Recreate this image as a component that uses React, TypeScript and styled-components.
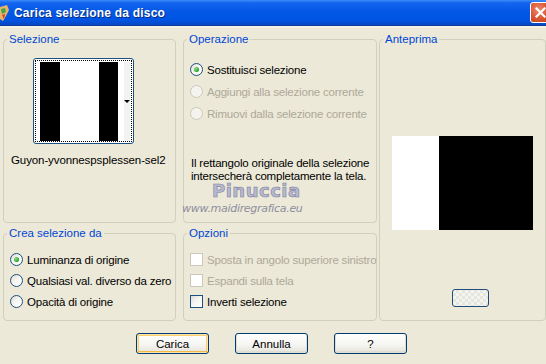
import styled, { createGlobalStyle } from 'styled-components'

const GlobalStyle = createGlobalStyle`
	html, body {
		margin: 0;
		padding: 0;
		background: #ece9d8;
		overflow: hidden;
	}
	* {
		box-sizing: border-box;
	}
`

const Window = styled.div`
	position: relative;
	width: 546px;
	height: 364px;
	display: flex;
	flex-direction: column;
	background: #ece9d8;
	font-family: 'Liberation Sans', Arial, sans-serif;
	font-size: 11px;
	color: #000;
	overflow: hidden;
`

const TitleBar = styled.div`
	height: 26px;
	flex: none;
	display: flex;
	align-items: center;
	gap: 4px;
	background: linear-gradient(
		to bottom,
		#3a8bf8 0%,
		#1464ee 12%,
		#0458e6 45%,
		#0054e3 80%,
		#0a47c4 100%
	);
	border-bottom: 1px solid #0c3d9c;
	color: #fff;
	font-family: 'Liberation Sans', Arial, sans-serif;
	font-weight: bold;
	font-size: 12px;
	text-shadow: 1px 1px 0 #0a2d80;
`

const TitleText = styled.span`
	flex: 1;
	letter-spacing: 0.2px;
`

const CloseButton = styled.div`
	width: 21px;
	height: 21px;
	margin-right: -5px;
	border: 1px solid #fff;
	border-radius: 3px;
	background: radial-gradient(circle at 40% 35%, #ec8a72 0%, #d9542f 55%, #c23d18 100%);
	display: flex;
	align-items: center;
	justify-content: center;
`

const Body = styled.div`
	flex: 1;
	display: flex;
	flex-direction: column;
	padding: 5px 0 0 3px;
	border-top: 2px solid #f4f2e8;
`

const Panels = styled.div`
	display: grid;
	grid-template-columns: 173px 7px 194px 2px 167px;
	grid-template-rows: 190px 4px 94px;
	grid-template-areas:
		'sel . op . prev'
		'. . . . prev'
		'crea . opt . prev';
`

const Group = styled.fieldset<{ $area: string }>`
	margin: 0;
	padding: 0 6px;
	min-width: 0;
	border: 1px solid #d0d0bf;
	border-radius: 4px;
	grid-area: ${(p) => p.$area};
	display: flex;
	flex-direction: column;
`

const Legend = styled.legend`
	padding: 0 2px;
	margin-left: -3px;
	color: #0046d5;
	font-size: 11.5px;
	line-height: 13px;
`

const Thumb = styled.div`
	position: relative;
	align-self: flex-start;
	margin: 12px 0 0 23px;
	width: 101px;
	height: 86px;
	border: 1px solid #1e4f7e;
	border-radius: 3px;
	background: #fff;
	padding: 3px 2px 2px 6px;
	display: flex;
	&::before {
		content: '';
		position: absolute;
		inset: 1px;
		border: 1px dotted #000;
	}
`

const Strip = styled.div<{ $w: number; $c: string }>`
	width: ${(p) => p.$w}px;
	background: ${(p) => p.$c};
`

const Arrow = styled.div`
	position: absolute;
	right: 3px;
	top: 41px;
	width: 0;
	height: 0;
	border-left: 3px solid transparent;
	border-right: 3px solid transparent;
	border-top: 3px solid #000;
`

const FileName = styled.div`
	margin: 10px 0 0 1px;
	font-size: 11.5px;
	letter-spacing: -0.1px;
`

const Options = styled.div<{ $top: number; $gap: number }>`
	display: flex;
	flex-direction: column;
	gap: ${(p) => p.$gap}px;
	margin-top: ${(p) => p.$top}px;
`

const OptionRow = styled.label<{ $disabled?: boolean }>`
	display: flex;
	align-items: center;
	gap: 4px;
	height: 13px;
	font-size: 11.5px;
	letter-spacing: -0.2px;
	color: ${(p) => (p.$disabled ? '#aca899' : '#000')};
	white-space: nowrap;
`

const RadioMark = styled.span<{ $checked?: boolean; $disabled?: boolean }>`
	width: 13px;
	height: 13px;
	flex: none;
	border-radius: 50%;
	border: 1px solid ${(p) => (p.$disabled ? '#cac8bb' : '#1c5180')};
	background: ${(p) =>
		p.$disabled
			? '#f4f3ee'
			: 'linear-gradient(135deg, #dcdad0 0%, #f6f5f1 45%, #fff 100%)'};
	display: flex;
	align-items: center;
	justify-content: center;
	&::after {
		content: '';
		display: ${(p) => (p.$checked ? 'block' : 'none')};
		width: 5px;
		height: 5px;
		border-radius: 50%;
		background: radial-gradient(circle at 35% 35%, #8fe08f, #21a121 70%);
	}
`

const CheckMark = styled.span<{ $disabled?: boolean }>`
	width: 13px;
	height: 13px;
	flex: none;
	border: 1px solid ${(p) => (p.$disabled ? '#cac8bb' : '#1c5180')};
	background: ${(p) =>
		p.$disabled ? '#fff' : 'linear-gradient(135deg, #dcdad0 0%, #f6f5f1 45%, #fff 100%)'};
`

const Note = styled.p`
	margin: 37px 0 0 1px;
	font-size: 11.5px;
	line-height: 13px;
	letter-spacing: -0.2px;
	white-space: nowrap;
`

const Preview = styled.div`
	display: flex;
	width: 141px;
	height: 94px;
	margin: 90px 0 0 6px;
	background: #000;
`

const PreviewWhite = styled.div`
	width: 47px;
	background: #fff;
`

const SmallButton = styled.div`
	width: 37px;
	height: 18px;
	margin: 59px 0 0 66px;
	border: 1px solid #1f4c7a;
	border-radius: 3px;
	background-color: #f4f4ef;
	background-image: linear-gradient(45deg, #e6e6e0 25%, transparent 25%, transparent 75%, #e6e6e0 75%),
		linear-gradient(45deg, #e6e6e0 25%, transparent 25%, transparent 75%, #e6e6e0 75%);
	background-size: 6px 6px;
	background-position: 0 0, 3px 3px;
`

const ButtonBar = styled.div`
	display: flex;
	gap: 26px;
	margin: 12px 0 0 133px;
`

const Button = styled.button<{ $default?: boolean }>`
	width: 73px;
	height: 21px;
	padding: 0;
	font-family: 'Liberation Sans', Arial, sans-serif;
	font-size: 11.5px;
	color: #000;
	border: 1px solid #003c74;
	border-radius: 3px;
	background: linear-gradient(to bottom, #fff 0%, #f4f4f0 60%, #e3e2da 100%);
	box-shadow: ${(p) =>
		p.$default
			? 'inset 0 0 0 1px #fce4a8, inset 0 -1px 0 1px #f5b845, inset 0 0 0 2px #f8cf72'
			: 'inset 0 -1px 0 1px #e0ddd2'};
`

const Watermark = styled.div`
	position: absolute;
	left: 182px;
	top: 181px;
	display: flex;
	flex-direction: column;
	align-items: flex-start;
	gap: 1px;
	pointer-events: none;
`

const WatermarkName = styled.span`
	margin-left: 30px;
	font-family: 'DejaVu Sans', sans-serif;
	font-weight: bold;
	font-size: 18px;
	line-height: 20px;
	letter-spacing: 0.5px;
	color: #b7b9d0;
	-webkit-text-stroke: 0.6px #7e809e;
`

const WatermarkUrl = styled.span`
	font-family: 'DejaVu Sans', sans-serif;
	font-style: italic;
	font-size: 11px;
	line-height: 13px;
	letter-spacing: -0.3px;
	color: #8e8e9e;
`

const AppIcon = () => (
	<svg width="10" height="18" viewBox="0 0 10 18">
		<path d="M0 3 L7 1 L9 6 L6 12 L3 17 L0 15 Z" fill="#e9b36a" />
		<path d="M1 5 L5 4 L6 8 L2 10 Z" fill="#3fa64a" />
		<path d="M2 11 L5 10 L4 15 Z" fill="#d04030" />
	</svg>
)

const CloseIcon = () => (
	<svg width="11" height="11" viewBox="0 0 11 11">
		<path d="M1.5 1.5 L9.5 9.5 M9.5 1.5 L1.5 9.5" stroke="#fff" strokeWidth="2.2" strokeLinecap="square" />
	</svg>
)

export default function App() {
	return (
		<Window>
			<GlobalStyle />
			<TitleBar>
				<AppIcon />
				<TitleText>Carica selezione da disco</TitleText>
				<CloseButton>
					<CloseIcon />
				</CloseButton>
			</TitleBar>
			<Body>
				<Panels>
					<Group $area="sel">
						<Legend>Selezione</Legend>
						<Thumb>
							<Strip $w={20} $c="#000" />
							<Strip $w={39} $c="#fff" />
							<Strip $w={19} $c="#000" />
							<Strip $w={6} $c="#fff" />
							<Strip $w={6} $c="#f2f2f2" />
							<Arrow />
						</Thumb>
						<FileName>Guyon-yvonnespsplessen-sel2</FileName>
					</Group>
					<Group $area="op">
						<Legend>Operazione</Legend>
						<Options $top={17} $gap={9}>
							<OptionRow>
								<RadioMark $checked />
								Sostituisci selezione
							</OptionRow>
							<OptionRow $disabled>
								<RadioMark $disabled />
								Aggiungi alla selezione corrente
							</OptionRow>
							<OptionRow $disabled>
								<RadioMark $disabled />
								Rimuovi dalla selezione corrente
							</OptionRow>
						</Options>
						<Note>
							Il rettangolo originale della selezione
							<br />
							intersecherà completamente la tela.
						</Note>
					</Group>
					<Group $area="prev">
						<Legend>Anteprima</Legend>
						<Preview>
							<PreviewWhite />
						</Preview>
						<SmallButton />
					</Group>
					<Group $area="crea">
						<Legend>Crea selezione da</Legend>
						<Options $top={13} $gap={8}>
							<OptionRow>
								<RadioMark $checked />
								Luminanza di origine
							</OptionRow>
							<OptionRow>
								<RadioMark />
								Qualsiasi val. diverso da zero
							</OptionRow>
							<OptionRow>
								<RadioMark />
								Opacità di origine
							</OptionRow>
						</Options>
					</Group>
					<Group $area="opt">
						<Legend>Opzioni</Legend>
						<Options $top={13} $gap={8}>
							<OptionRow $disabled>
								<CheckMark $disabled />
								Sposta in angolo superiore sinistro
							</OptionRow>
							<OptionRow $disabled>
								<CheckMark $disabled />
								Espandi sulla tela
							</OptionRow>
							<OptionRow>
								<CheckMark />
								Inverti selezione
							</OptionRow>
						</Options>
					</Group>
				</Panels>
				<ButtonBar>
					<Button $default>Carica</Button>
					<Button>Annulla</Button>
					<Button>?</Button>
				</ButtonBar>
			</Body>
			<Watermark>
				<WatermarkName>Pinuccia</WatermarkName>
				<WatermarkUrl>www.maidiregrafica.eu</WatermarkUrl>
			</Watermark>
		</Window>
	)
}
